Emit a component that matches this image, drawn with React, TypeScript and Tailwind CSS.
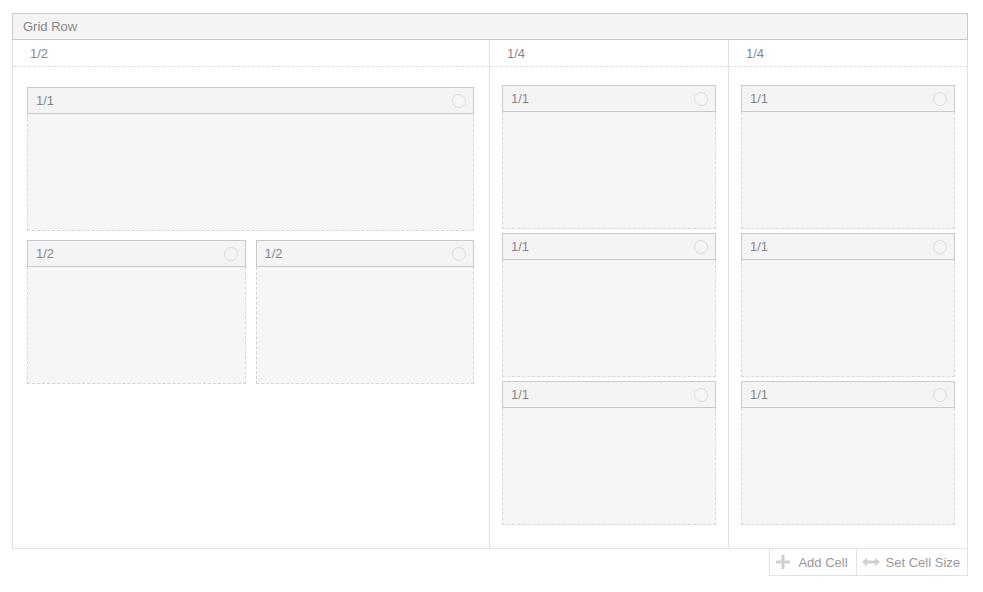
const font = { fontFamily: '"Liberation Sans", Arial, sans-serif' };

function Dot() {
  return <span className="w-[14px] h-[14px] rounded-full border border-[#dcdcdc] bg-[#f5f5f5]" />;
}

function Cell({ label, className = '' }: { label: string; className?: string }) {
  return (
    <div className={`flex flex-col h-[144px] ${className}`}>
      <div className="h-[27px] shrink-0 flex items-center justify-between border border-[#c9c9c9] bg-[#f4f4f4] pl-[8px] pr-[7px] text-[13px] text-[#888]">
        <span className="pt-[1px]">{label}</span>
        <Dot />
      </div>
      <div className="flex-1 border-x border-b border-dashed border-[#d6d6d6] bg-[#f6f6f6]" />
    </div>
  );
}

function ColumnHead({ label }: { label: string }) {
  return (
    <div className="h-[27px] flex items-center pl-[17px] pt-[1px] border-b border-dashed border-[#dedede] text-[13px] text-[#888]">
      {label}
    </div>
  );
}

export default function App() {
  return (
    <div className="w-[983px] h-[592px] bg-white pt-[13px] pl-[12px]" style={font}>
      <div className="w-[956px]">
        <div className="h-[27px] flex items-center pl-[10px] pt-[1px] border border-[#c9c9c9] bg-[#f4f4f4] text-[13px] text-[#888]">
          Grid Row
        </div>
        <div className="h-[509px] flex border-x border-b border-[#e2e2e2]">
          <div className="w-[477px] border-r border-[#e2e2e2]">
            <ColumnHead label="1/2" />
            <div className="pl-[14px] pr-[15px] pt-[20px] flex flex-col gap-[9px]">
              <Cell label="1/1" />
              <div className="flex gap-[10px]">
                <Cell label="1/2" className="flex-1" />
                <Cell label="1/2" className="flex-1" />
              </div>
            </div>
          </div>
          <div className="w-[239px] border-r border-[#e2e2e2]">
            <ColumnHead label="1/4" />
            <div className="px-[12px] pt-[18px] flex flex-col gap-[4px]">
              <Cell label="1/1" />
              <Cell label="1/1" />
              <Cell label="1/1" />
            </div>
          </div>
          <div className="flex-1">
            <ColumnHead label="1/4" />
            <div className="px-[12px] pt-[18px] flex flex-col gap-[4px]">
              <Cell label="1/1" />
              <Cell label="1/1" />
              <Cell label="1/1" />
            </div>
          </div>
        </div>
        <div className="flex justify-end">
          <div className="flex h-[27px] border-x border-b border-[#e2e2e2] text-[13px] text-[#999]">
            <div className="flex items-center gap-[8px] pl-[6px] pr-[8px] border-r border-[#e2e2e2]">
              <svg width="14" height="14" viewBox="0 0 14 14">
                <rect x="5.5" y="0" width="3" height="14" fill="#cfcfcf" />
                <rect x="0" y="5.5" width="14" height="3" fill="#cfcfcf" />
              </svg>
              <span className="pt-[1px]">Add Cell</span>
            </div>
            <div className="flex items-center gap-[6px] pl-[5px] pr-[7px]">
              <svg width="18" height="10" viewBox="0 0 18 10">
                <path d="M0 5 L5 0.5 V3.5 H13 V0.5 L18 5 L13 9.5 V6.5 H5 V9.5 Z" fill="#cfcfcf" />
              </svg>
              <span className="pt-[1px]">Set Cell Size</span>
            </div>
          </div>
        </div>
      </div>
    </div>
  );
}
